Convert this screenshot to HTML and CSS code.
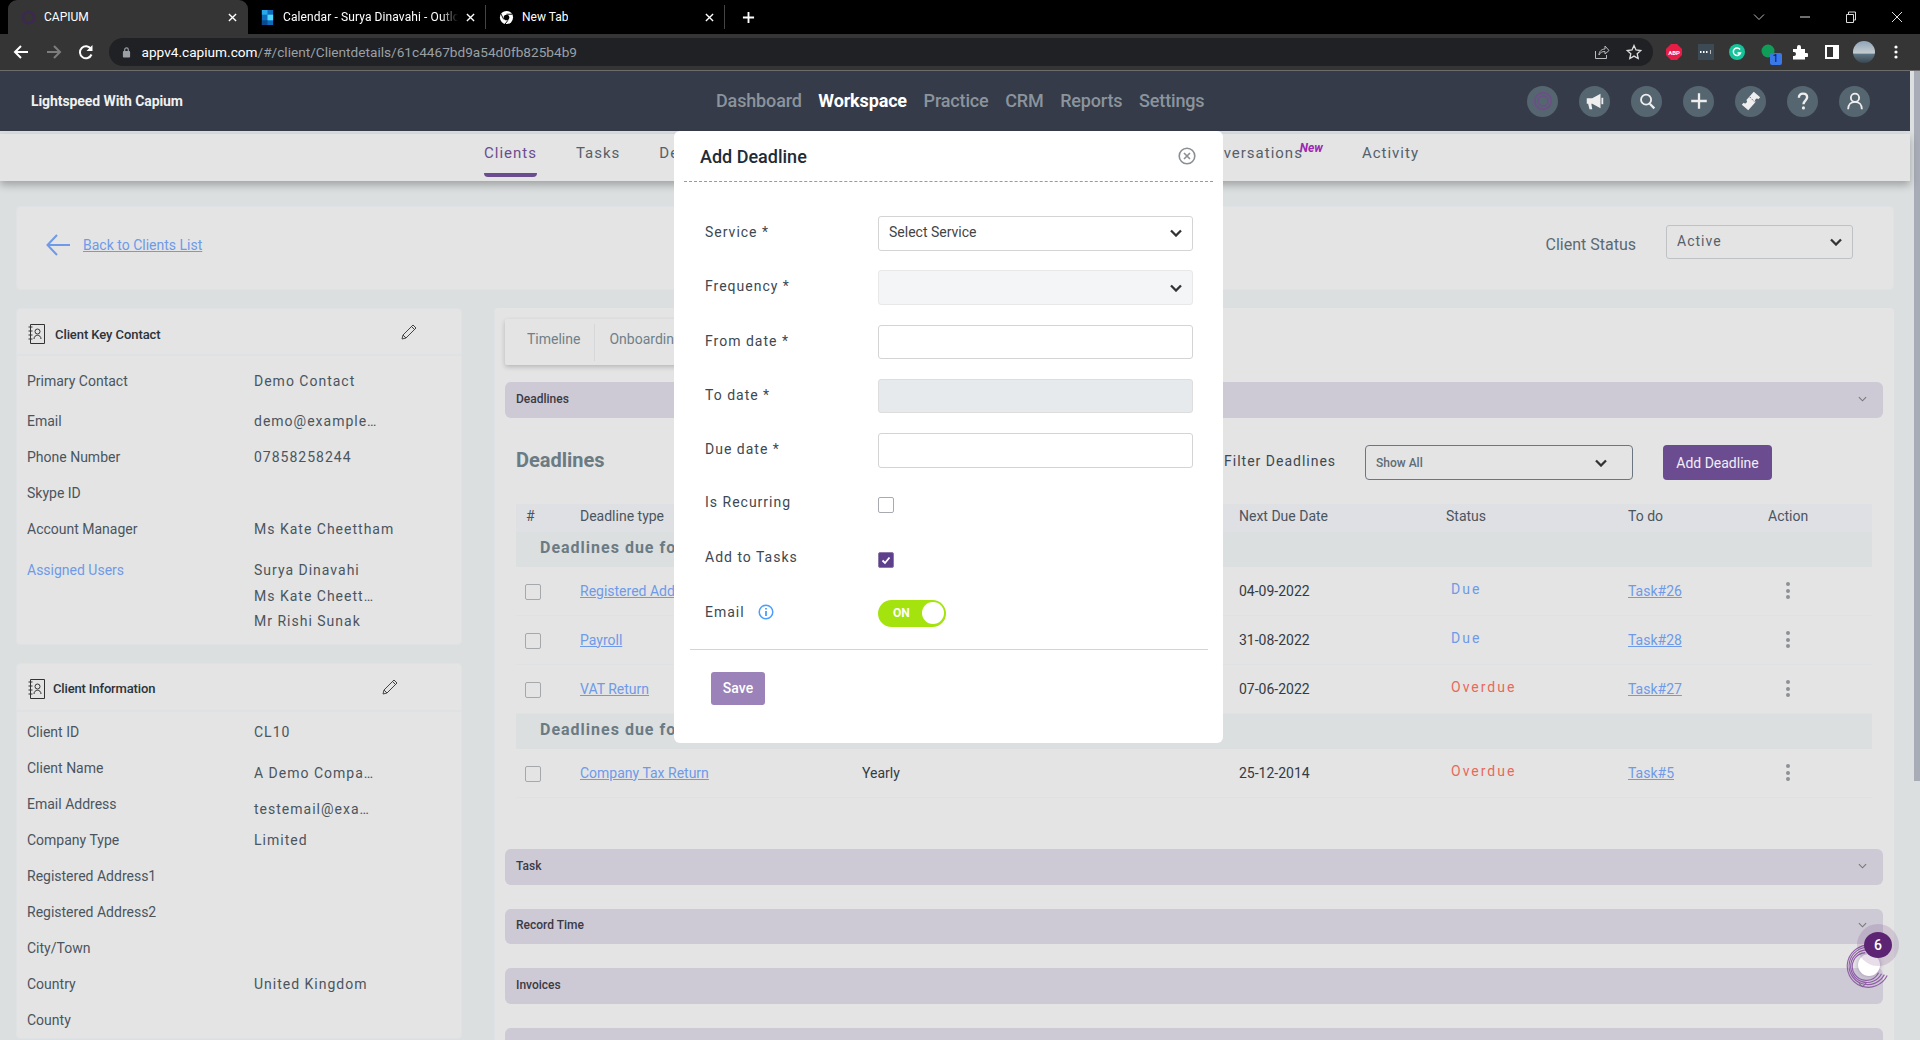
FILE: index.html
```html
<!DOCTYPE html>
<html lang="en">
<head>
<meta charset="utf-8">
<title>CAPIUM</title>
<link rel="stylesheet" href="styles.css">
</head>
<body>
<div class="browser">
  <div class="tabstrip">
    <div class="tab tab-active">
      <svg class="fav" viewBox="0 0 16 16"><circle cx="8" cy="8" r="6" fill="none" stroke="#3b2a4d" stroke-width="3"/></svg>
      <span class="tab-title">CAPIUM</span>
      <svg class="tab-x" viewBox="0 0 10 10"><path d="M1 1l8 8M9 1l-8 8" stroke="#fff" stroke-width="1.5"/></svg>
    </div>
    <div class="tab tab-two">
      <svg class="fav" viewBox="0 0 16 16"><rect x="2" width="12" height="16" fill="#0f6cbd"/><rect x="2" width="6" height="5" fill="#28a8ea"/><rect x="8" y="5" width="6" height="6" fill="#50d9ff"/><rect x="2" y="11" width="6" height="5" fill="#0a4a8a"/></svg>
      <span class="tab-title tab-clip">Calendar - Surya Dinavahi - Outlook</span>
      <svg class="tab-x" viewBox="0 0 10 10"><path d="M1 1l8 8M9 1l-8 8" stroke="#fff" stroke-width="1.5"/></svg>
    </div>
    <div class="tab tab-three">
      <svg class="fav" viewBox="0 0 16 16"><circle cx="8" cy="8" r="7" fill="#fff"/><circle cx="8" cy="8" r="3" fill="#000"/><path d="M8 4.500h6M5 10L2 4M9.500 11L6.500 15" stroke="#000" stroke-width="1"/></svg>
      <span class="tab-title">New Tab</span>
      <svg class="tab-x" viewBox="0 0 10 10"><path d="M1 1l8 8M9 1l-8 8" stroke="#fff" stroke-width="1.5"/></svg>
    </div>
    <svg class="newtab" viewBox="0 0 14 14"><path d="M7 1v12M1 7h12" stroke="#fff" stroke-width="2"/></svg>
    <div class="winctl">
      <svg viewBox="0 0 12 12"><path d="M1 3.500l5 5 5-5" fill="none" stroke="#bbb"/></svg>
      <svg viewBox="0 0 12 12"><path d="M1 6h10" stroke="#ddd"/></svg>
      <svg viewBox="0 0 12 12"><path d="M1.500 3.500h7v8h-7zM3.500 3.500v-2.500h7v8h-2" fill="none" stroke="#ddd"/></svg>
      <svg viewBox="0 0 12 12"><path d="M1 1l10 10M11 1L1 11" stroke="#ddd"/></svg>
    </div>
  </div>
  <div class="toolbar">
    <svg class="nav-ic" viewBox="0 0 16 16"><path d="M15 8H2M8 2L2 8l6 6" fill="none" stroke="#fff" stroke-width="2"/></svg>
    <svg class="nav-ic" viewBox="0 0 16 16"><path d="M1 8h13M8 2l6 6-6 6" fill="none" stroke="#7d7d7d" stroke-width="2"/></svg>
    <svg class="nav-ic" viewBox="0 0 16 16"><path d="M13.500 10.500A6 6 0 1 1 13 5" fill="none" stroke="#fff" stroke-width="2"/><path d="M14.500 1v6h-6z" fill="#fff"/></svg>
    <div class="omnibox">
      <svg class="lock" viewBox="0 0 10 12"><rect x="1" y="5" width="8" height="7" rx="1" fill="#9aa0a6"/><path d="M3 5V3.500a2 2 0 0 1 4 0V5" fill="none" stroke="#9aa0a6" stroke-width="1.300"/></svg>
      <span class="url"><b class="url-host">appv4.capium.com</b>/#/client/Clientdetails/61c4467bd9a54d0fb825b4b9</span>
      <svg class="omni-ic" viewBox="0 0 16 16"><path d="M1.500 7v7.500h11V11" fill="none" stroke="#bbb"/><path d="M5 11c0-4 3-6 6-6V2l4 4.500L11 10V7.500c-3 0-5 1-6 3.500z" fill="none" stroke="#bbb"/></svg>
      <svg class="omni-ic" viewBox="0 0 16 16"><path d="M8 1.500l2 4.500 4.800.500-3.600 3.200 1 4.800L8 12.100 3.800 14.500l1-4.800L1.200 6.500 6 6z" fill="none" stroke="#ddd" stroke-width="1.300"/></svg>
    </div>
    <div class="exts">
      <svg class="ext" viewBox="0 0 16 16"><path d="M5 0h6l5 5v6l-5 5H5l-5-5V5z" fill="#e81d45"/><text x="8" y="10.500" class="ext-abp">ABP</text></svg>
      <svg class="ext" viewBox="0 0 16 16"><rect width="16" height="16" fill="#3c4a56"/><path d="M2 8h1.500M5 8h1.500M8 8h1.500" stroke="#fff" stroke-width="2"/><path d="M12.500 6v4" stroke="#bbb"/></svg>
      <svg class="ext" viewBox="0 0 16 16"><circle cx="8" cy="8" r="8" fill="#15c39a"/><path d="M11 5.500A3.700 3.700 0 1 0 11.500 9H8.500" fill="none" stroke="#fff" stroke-width="1.500"/></svg>
      <span class="ext-badge-wrap"><svg class="ext" viewBox="0 0 16 16"><circle cx="7" cy="7" r="6.500" fill="#0f9d58"/></svg><span class="ext-badge">1</span></span>
      <svg class="ext" viewBox="0 0 16 16"><path d="M1 5h4V3a2 2 0 0 1 4 0v2h4v4h1.500a2 2 0 0 1 0 4H13v2.500H1V12h1a2 2 0 0 0 0-4H1z" fill="#fff"/></svg>
      <svg class="ext" viewBox="0 0 16 16"><rect x="1" y="1" width="14" height="14" fill="#fff"/><rect x="3" y="3" width="6" height="10" fill="#333"/></svg>
      <svg class="avatar" viewBox="0 0 22 22"><defs><linearGradient id="av" x1="0" y1="0" x2="0" y2="1"><stop offset="0" stop-color="#8fa5b8"/><stop offset=".55" stop-color="#c5ccd0"/><stop offset=".6" stop-color="#5d7482"/><stop offset="1" stop-color="#3a4750"/></linearGradient></defs><circle cx="11" cy="11" r="11" fill="url(#av)"/></svg>
      <svg class="ext ext-dots" viewBox="0 0 16 16"><circle cx="8" cy="3" r="1.600" fill="#fff"/><circle cx="8" cy="8" r="1.600" fill="#fff"/><circle cx="8" cy="13" r="1.600" fill="#fff"/></svg>
    </div>
  </div>
</div>

<div class="app">
  <div class="content">
    <header class="topbar">
      <div class="brand">Lightspeed With Capium</div>
      <nav class="mainnav">
        <a>Dashboard</a><a class="on">Workspace</a><a>Practice</a><a>CRM</a><a>Reports</a><a>Settings</a>
      </nav>
      <div class="hicons">
        <span class="hicon"><svg viewBox="0 0 24 24"><circle cx="12" cy="12" r="9" fill="none" stroke="#6b4f86" stroke-width="2"/><circle cx="12" cy="12" r="5.500" fill="none" stroke="#6b4f86" stroke-width="1.500"/></svg></span>
        <span class="hicon"><svg viewBox="0 0 24 24"><path d="M3 9h6l9-5v16l-9-5H8l1 6H6l-1.500-6H3z" fill="#eee"/><path d="M20 8.500v7" stroke="#eee" stroke-width="2"/></svg></span>
        <span class="hicon"><svg viewBox="0 0 24 24"><circle cx="11" cy="10.500" r="5.500" fill="none" stroke="#eee" stroke-width="2"/><path d="M15 15l5 5" stroke="#eee" stroke-width="2.500"/></svg></span>
        <span class="hicon"><svg viewBox="0 0 24 24"><path d="M12 3.500v17M3.500 12h17" stroke="#eee" stroke-width="2.500"/></svg></span>
        <span class="hicon"><svg viewBox="0 0 24 24"><path d="M15 2l7 6-2 2a2 2 0 0 0-3 3l-8 9-7-6 2-2a2 2 0 0 0 3-3z" fill="#eee"/><path d="M10.500 7.500l6 6" stroke="#566670" stroke-dasharray="2 1.500"/></svg></span>
        <span class="hicon"><svg viewBox="0 0 24 24"><path d="M7.500 8.500C7.500 5.500 9.500 4 12 4s4.500 1.500 4.500 4c0 3.500-4 3.500-4 7.500" fill="none" stroke="#eee" stroke-width="2.600"/><circle cx="12.500" cy="19.500" r="1.700" fill="#eee"/></svg></span>
        <span class="hicon"><svg viewBox="0 0 24 24"><circle cx="12" cy="8.500" r="4.500" fill="none" stroke="#eee" stroke-width="2"/><path d="M4.500 21c0-5 3-8 7.500-8s7.500 3 7.500 8" fill="none" stroke="#eee" stroke-width="2"/></svg></span>
      </div>
    </header>
    <div class="subwrap">
      <nav class="subnav">
        <div class="subgroup">
          <a class="subtab subtab-on">Clients</a><a class="subtab">Tasks</a><a class="subtab">Deadlines</a>
        </div>
        <div class="subgroup">
          <a class="subtab subtab-new">Conversations<em class="newtag">New</em></a><a class="subtab">Activity</a>
        </div>
      </nav>
    </div>

    <main class="main">
      <section class="backcard">
        <svg class="backarrow" viewBox="0 0 24 22"><path d="M24 11H2M11 1L1.500 11 11 21" fill="none" stroke="#6e9ae8" stroke-width="2"/></svg>
        <a class="backlink">Back to Clients List</a>
        <span class="status-label">Client Status</span>
        <div class="status-select"><span>Active</span><svg class="chev" viewBox="0 0 12 8"><path d="M1 1.500l5 5 5-5" fill="none" stroke="#333" stroke-width="2.300"/></svg></div>
      </section>

      <div class="columns">
        <aside class="leftcol">
          <section class="card card-key">
            <div class="cardhead">
              <svg class="bookic" viewBox="0 0 17 20"><path d="M2.500 .500h14v19h-14z" fill="none" stroke="#333"/><path d="M.5 3h4M.5 7h4M.5 11h4M.5 15h4" stroke="#333"/><circle cx="9.500" cy="7.500" r="2.500" fill="none" stroke="#333"/><path d="M6 15c0-5 7-5 7 0" fill="none" stroke="#333"/></svg>
              <h3 class="cardtitle">Client Key Contact</h3>
              <svg class="pencil" viewBox="0 0 16 16"><path d="M1 15l1-4L12 1l3 3L5 14zM2 11l3 3M10.500 2.500l3 3" fill="none" stroke="#444"/></svg>
            </div>
            <div class="kv kv-key">
              <div class="kvrow kvrow-first"><span class="k">Primary Contact</span><span class="v">Demo Contact</span></div>
              <div class="kvrow"><span class="k">Email</span><span class="v">demo@example…</span></div>
              <div class="kvrow"><span class="k">Phone Number</span><span class="v">07858258244</span></div>
              <div class="kvrow"><span class="k">Skype ID</span><span class="v"></span></div>
              <div class="kvrow"><span class="k">Account Manager</span><span class="v">Ms Kate Cheettham</span></div>
              <div class="kvrow kvrow-users"><span class="k k-link">Assigned Users</span>
                <div class="vlist"><span class="v">Surya Dinavahi</span><span class="v">Ms Kate Cheett…</span><span class="v">Mr Rishi Sunak</span></div>
              </div>
            </div>
          </section>
          <section class="card card-info">
            <div class="cardhead cardhead-info">
              <svg class="bookic" viewBox="0 0 17 20"><path d="M2.500 .500h14v19h-14z" fill="none" stroke="#333"/><path d="M.5 3h4M.5 7h4M.5 11h4M.5 15h4" stroke="#333"/><circle cx="9.500" cy="7.500" r="2.500" fill="none" stroke="#333"/><path d="M6 15c0-5 7-5 7 0" fill="none" stroke="#333"/></svg>
              <h3 class="cardtitle">Client Information</h3>
              <svg class="pencil" viewBox="0 0 16 16"><path d="M1 15l1-4L12 1l3 3L5 14zM2 11l3 3M10.500 2.500l3 3" fill="none" stroke="#444"/></svg>
            </div>
            <div class="kv kv-info">
              <div class="kvrow"><span class="k">Client ID</span><span class="v">CL10</span></div>
              <div class="kvrow"><span class="k">Client Name</span><span class="v v-low">A Demo Compa…</span></div>
              <div class="kvrow"><span class="k">Email Address</span><span class="v v-low">testemail@exa…</span></div>
              <div class="kvrow"><span class="k">Company Type</span><span class="v">Limited</span></div>
              <div class="kvrow"><span class="k">Registered Address1</span><span class="v"></span></div>
              <div class="kvrow"><span class="k">Registered Address2</span><span class="v"></span></div>
              <div class="kvrow"><span class="k">City/Town</span><span class="v"></span></div>
              <div class="kvrow"><span class="k">Country</span><span class="v">United Kingdom</span></div>
              <div class="kvrow"><span class="k">County</span><span class="v"></span></div>
            </div>
          </section>
        </aside>

        <section class="rightcol">
          <div class="pilltabs"><a class="pilltab">Timeline</a><a class="pilltab">Onboarding</a></div>
          <div class="acc"><span>Deadlines</span><svg class="acc-chev" viewBox="0 0 10 6"><path d="M1 1l4 4 4-4" fill="none" stroke="#777" stroke-width="1.200"/></svg></div>

          <div class="deadlines">
            <div class="dl-top">
              <h2 class="dl-title">Deadlines</h2>
              <div class="dl-filter">
                <span class="filter-label">Filter Deadlines</span>
                <div class="filter-select"><span>Show All</span><svg class="chev" viewBox="0 0 12 8"><path d="M1 1.500l5 5 5-5" fill="none" stroke="#333" stroke-width="2.300"/></svg></div>
                <button class="btn-add">Add Deadline</button>
              </div>
            </div>
            <div class="tbl">
              <div class="trow thead"><span class="hash">#</span><span>Deadline type</span><span></span><span>Next Due Date</span><span>Status</span><span>To do</span><span>Action</span></div>
              <div class="tgroup tgroup-first">Deadlines due for 2022</div>
              <div class="trow tbody"><span class="hash"><i class="cb"></i></span><a class="lnk">Registered Address</a><span></span><span>04-09-2022</span><span class="st st-due">Due</span><a class="lnk">Task#26</a><span class="act"><i></i><i></i><i></i></span></div>
              <div class="trow tbody"><span class="hash"><i class="cb"></i></span><a class="lnk">Payroll</a><span></span><span>31-08-2022</span><span class="st st-due">Due</span><a class="lnk">Task#28</a><span class="act"><i></i><i></i><i></i></span></div>
              <div class="trow tbody"><span class="hash"><i class="cb"></i></span><a class="lnk">VAT Return</a><span></span><span>07-06-2022</span><span class="st st-over">Overdue</span><a class="lnk">Task#27</a><span class="act"><i></i><i></i><i></i></span></div>
              <div class="tgroup">Deadlines due for 2014</div>
              <div class="trow tbody"><span class="hash"><i class="cb"></i></span><a class="lnk">Company Tax Return</a><span>Yearly</span><span>25-12-2014</span><span class="st st-over">Overdue</span><a class="lnk">Task#5</a><span class="act"><i></i><i></i><i></i></span></div>
            </div>
          </div>

          <div class="acc acc-task"><span>Task</span><svg class="acc-chev" viewBox="0 0 10 6"><path d="M1 1l4 4 4-4" fill="none" stroke="#777" stroke-width="1.200"/></svg></div>
          <div class="acc acc-time"><span>Record Time</span><svg class="acc-chev" viewBox="0 0 10 6"><path d="M1 1l4 4 4-4" fill="none" stroke="#777" stroke-width="1.200"/></svg></div>
          <div class="acc acc-next"><span>Invoices</span><svg class="acc-chev" viewBox="0 0 10 6"><path d="M1 1l4 4 4-4" fill="none" stroke="#777" stroke-width="1.200"/></svg></div>
          <div class="acc acc-next"></div>
        </section>
      </div>
    </main>
  </div>
  <div class="scrolltrack"><div class="scrollthumb"></div></div>

  <div class="modal">
    <div class="modal-head">
      <h2 class="modal-title">Add Deadline</h2>
      <svg class="modal-x" viewBox="0 0 18 18"><circle cx="9" cy="9" r="7.800" fill="none" stroke="#8a8f94" stroke-width="1.600"/><path d="M6 6l6 6M12 6l-6 6" stroke="#8a8f94" stroke-width="1.600"/></svg>
    </div>
    <div class="mform">
      <label class="mlabel">Service *</label>
      <div class="minput"><span class="minput-text">Select Service</span><svg class="chev" viewBox="0 0 12 8"><path d="M1 1.500l5 5 5-5" fill="none" stroke="#333" stroke-width="2.300"/></svg></div>
      <label class="mlabel">Frequency *</label>
      <div class="minput minput-soft"><svg class="chev" viewBox="0 0 12 8"><path d="M1 1.500l5 5 5-5" fill="none" stroke="#333" stroke-width="2.300"/></svg></div>
      <label class="mlabel">From date *</label>
      <div class="minput"></div>
      <label class="mlabel">To date *</label>
      <div class="minput minput-off"></div>
      <label class="mlabel">Due date *</label>
      <div class="minput"></div>
      <label class="mlabel mlabel-top">Is Recurring</label>
      <div class="mcheckcell"><i class="mcb"></i></div>
      <label class="mlabel mlabel-top">Add to Tasks</label>
      <div class="mcheckcell"><i class="mcb mcb-on"><svg viewBox="0 0 12 12"><path d="M2.500 6.500l2.500 2.500 4.500-5.500" fill="none" stroke="#fff" stroke-width="1.800"/></svg></i></div>
      <label class="mlabel mlabel-email">Email <svg class="infoic" viewBox="0 0 16 16"><circle cx="8" cy="8" r="6.800" fill="none" stroke="#4a9eff" stroke-width="1.500"/><path d="M8 7v5M8 4v1.600" stroke="#4a9eff" stroke-width="1.800"/></svg></label>
      <div class="toggle"><span>ON</span><i></i></div>
    </div>
    <hr class="mrule">
    <button class="btn-save">Save</button>
  </div>

  <div class="chatw">
    <svg class="spiral" viewBox="0 0 48 48"><g fill="none" stroke="#8f5ea6"><path d="M43 34A22 22 0 1 1 27 2.500" stroke-width="1.200"/><path d="M40 33A19.500 19.500 0 1 1 24 4.500" stroke-width="1.200"/><path d="M37 32A17 17 0 1 1 22 7.200" stroke-width="1.200"/><path d="M34 31A14.500 14.500 0 1 1 20 10" stroke-width="1.200"/></g></svg>
    <i class="chat-core"></i>
    <span class="chat-halo"><span class="chat-badge">6</span></span>
  </div>
</div>
</body>
</html>
```
FILE: styles.css
```css
* { box-sizing: border-box; }
html, body { margin: 0; height: 1040px; overflow: hidden; }
body { font-family: Roboto, "Liberation Sans", sans-serif; font-size: 14px; background: #dcdfe0; color: #3d4852; }
h2, h3 { margin: 0; }
a { cursor: pointer; }
i, em { display: block; }

.browser { height: 71px; background: #353535; }
.tabstrip { height: 34px; background: #000; display: flex; align-items: stretch; position: relative; padding-left: 8px; }
.tab { display: flex; align-items: center; font-size: 12px; color: #fff; height: 34px; position: relative; }
.tab-active { width: 240px; background: #353535; border-radius: 9px 9px 0 0; padding-left: 13px; }
.tab-two { width: 238px; padding-left: 12px; border-right: 1px solid #444; height: 24px; margin-top: 5px; }
.tab-three { width: 239px; padding-left: 13px; border-right: 1px solid #444; height: 24px; margin-top: 5px; }
.fav { width: 15px; height: 15px; flex: none; }
.tab-title { margin-left: 8px; white-space: nowrap; overflow: hidden; }
.tab-clip { width: 175px; letter-spacing: .1px; -webkit-mask-image: linear-gradient(90deg, #000 90%, transparent); mask-image: linear-gradient(90deg, #000 90%, transparent); }
.tab-x { width: 9px; height: 9px; position: absolute; right: 10px; top: 50%; margin-top: -4px; }
.tab-active .tab-x { right: 11px; }
.newtab { width: 13px; height: 13px; align-self: center; margin-left: 17px; }
.winctl { margin-left: auto; display: flex; align-items: center; gap: 34px; padding-right: 17px; }
.winctl svg { width: 12px; height: 12px; }
.toolbar { height: 37px; padding-top: 4px; display: flex; align-items: flex-start; padding-left: 13px; border-bottom: 1px solid #6c6c6c; }
.nav-ic { width: 16px; height: 16px; margin: 6px 17px 0 0; flex: none; }
.nav-ic:nth-child(2) { margin-right: 16px; }
.nav-ic:nth-child(3) { margin-right: 15px; }
.omnibox { width: 1544px; height: 28px; background: #202124; border-radius: 14px; display: flex; align-items: center; padding: 0 11px 0 13px; }
.lock { width: 9px; height: 12px; flex: none; }
.url { margin-left: 10.500px; font-size: 13.650px; color: #9aa0a6; white-space: nowrap; }
.url-host { color: #fff; font-weight: 400; }
.omni-ic { width: 16px; height: 16px; flex: none; }
.omni-ic:nth-of-type(2) { margin-left: auto; margin-right: 16px; }
.exts { display: flex; align-items: center; height: 28px; margin-left: 13px; gap: 15.500px; }
.ext { width: 16px; height: 16px; flex: none; }
.ext-abp { font: 700 6px Roboto, sans-serif; fill: #fff; text-anchor: middle; }
.ext-badge-wrap { position: relative; display: block; width: 16px; height: 16px; }
.ext-badge { position: absolute; left: 9px; top: 9px; width: 12px; height: 12px; background: #3b78e7; border-radius: 2px; font-size: 10px; line-height: 12px; text-align: center; color: #111; }
.avatar { width: 22px; height: 22px; flex: none; margin: 0 -3px 0 -2px; }

.app { display: flex; position: relative; height: 969px; overflow: hidden; }
.content { flex: none; width: 1910px; }
.scrolltrack { flex: 1; display: flex; justify-content: flex-end; background: #dcdfe0; }
.scrollthumb { width: 6px; height: 710px; background: #a8acb6; }

.topbar { height: 60px; background: #353b48; display: flex; align-items: center; padding-left: 31px; position: relative; }
.brand { width: 685px; color: #f0f0f0; font-size: 14px; font-weight: 700; letter-spacing: -.08px; }
.mainnav { display: flex; gap: 16.600px; padding-bottom: 2px; font-size: 18px; font-weight: 500; letter-spacing: -.15px; color: #8b949d; }
.mainnav .on { color: #fff; font-weight: 700; }
.hicons { margin-left: auto; display: flex; gap: 21px; padding-right: 40px; }
.hicon { width: 31px; height: 31px; border-radius: 50%; background: #566670; display: flex; align-items: center; justify-content: center; }
.hicon svg { width: 22px; height: 22px; }

.subwrap { padding-top: 3px; }
.subnav { height: 47px; background: #e4e4e4; display: flex; justify-content: space-between; padding: 0 491px 0 484px; box-shadow: 0 4px 8px rgba(0,0,0,.28); position: relative; }
.subgroup { display: flex; gap: 39px; }
.subtab { height: 43px; padding-top: 10px; font-size: 15px; letter-spacing: 1px; color: #55606b; position: relative; white-space: nowrap; }
.subtab-on { color: #6b4c91; border-bottom: 4px solid #6b4c91; border-radius: 0 0 4px 4px; }
.subtab-new { margin-right: 20px; }
.newtag { position: absolute; right: -20px; top: 7px; font-size: 12px; font-weight: 700; letter-spacing: 0; color: #9c27b0; }

.main { padding: 25px 16px 0; }
.backcard { height: 84px; background: #e4e4e4; border: 1px solid #dfe2e4; border-radius: 4px; display: flex; align-items: center; padding: 0 40px 6px 29px; }
.backarrow { width: 24px; height: 22px; flex: none; }
.backlink { margin-left: 13px; color: #6e9ae8; text-decoration: underline; font-size: 14px; }
.status-label { margin-left: auto; font-size: 16px; color: #5a6a74; margin-top: -2px; }
.status-select { width: 187px; height: 34px; margin: -6px 0 0 30px; border: 1px solid #bfc2c4; border-radius: 3px; display: flex; align-items: center; justify-content: space-between; padding: 0 10px; letter-spacing: 1px; color: #55606b; }
.status-select span { margin-top: -2px; }
.chev { width: 12px; height: 8px; flex: none; }

.columns { display: flex; gap: 32px; margin-top: 18px; align-items: flex-start; }
.leftcol { width: 446px; flex: none; display: flex; flex-direction: column; gap: 18px; }
.card { background: #e4e4e4; border: 1px solid #dfe2e4; border-radius: 4px; }
.card-key { height: 337px; }
.cardhead { height: 47px; display: flex; align-items: center; padding: 5px 44px 0 11px; border-bottom: 2px solid #dfe2e4; }
.cardhead-info { height: 48px; padding-right: 63px; padding-top: 3px; }
.bookic { width: 17px; height: 20px; flex: none; }
.cardtitle { margin-left: 10px; font-size: 13px; font-weight: 500; letter-spacing: -.08px; color: #2b333b; }
.cardhead-info .cardtitle { margin-left: 8px; letter-spacing: -.15px; }
.pencil { width: 16px; height: 16px; margin-left: auto; margin-top: -4px; flex: none; }
.kv { padding: 0 10px; }
.kv-key { padding-top: 7px; }
.kv-info { padding-top: 2px; }
.kvrow { display: grid; grid-template-columns: 227px 1fr; height: 36px; line-height: 36px; align-items: start; }
.kvrow-first { height: 40px; }
.kvrow-users { height: auto; padding-top: 5px; }
.k { color: #4a5560; white-space: nowrap; }
.k-link { color: #6e9ae8; }
.v { letter-spacing: 1px; color: #4a5560; white-space: nowrap; }
.v-low { margin-top: 5px; }
.vlist { display: flex; flex-direction: column; padding-top: 6px; }
.vlist .v { line-height: 25.500px; }

.rightcol { flex: 1; height: 900px; background: #e4e4e4; border-left: 1px solid #dfe2e4; border-radius: 4px; padding: 11px 11px 0 10px; }
.pilltabs { width: 500px; height: 46px; display: flex; align-items: flex-start; padding-top: 5px; box-shadow: 0 2px 5px rgba(0,0,0,.2); border-radius: 2px; }
.pilltab { height: 37px; line-height: 31px; padding: 0 14px 0 22px; color: #6f8088; border-right: 1px solid #d5d7d9; }
.pilltab + .pilltab { padding-left: 14px; border-right: 0; }
.acc { height: 36px; margin-top: 17px; background: #cdc9d5; border-radius: 6px; display: flex; align-items: center; justify-content: space-between; padding: 0 16px 2px 11px; font-size: 12px; font-weight: 500; color: #3a3a44; }
.acc-chev { width: 9px; height: 6px; }
.acc-task { margin-top: 51px; }
.acc-time { height: 35px; margin-top: 24px; }
.acc-next { margin-top: 24px; }

.deadlines { padding: 27px 11px 0; }
.dl-top { display: flex; justify-content: space-between; align-items: flex-start; height: 35px; }
.dl-title { font-size: 20px; font-weight: 700; line-height: 30px; color: #6b7b84; }
.dl-filter { display: flex; align-items: center; height: 35px; gap: 30px; padding-right: 100px; }
.filter-label { letter-spacing: 1px; color: #3d4852; width: 111px; white-space: nowrap; margin-top: -3px; }
.filter-select { width: 268px; height: 35px; border: 1px solid #6c7680; border-radius: 4px; display: flex; align-items: center; justify-content: space-between; padding: 0 25px 0 10px; font-size: 12px; font-weight: 500; color: #5f6c75; }
.btn-add { width: 109px; height: 35px; border: 0; border-radius: 4px; background: #6b4c91; color: #f2eef7; font: 400 14px Roboto, sans-serif; padding: 0; }

.tbl { margin-top: 24px; }
.trow { display: grid; grid-template-columns: 64px 282px 377px 207px 182px 140px 1fr; align-items: center; }
.thead { height: 28px; background: #dfe0e4; color: #4a5560; padding-bottom: 4px; }
.tbody { height: 49px; border-bottom: 1px solid #dfe1e3; color: #333b44; }
.hash { padding-left: 10px; }
.tgroup { height: 35px; background: #dcdfe0; padding: 0 0 0 24px; font-size: 16px; font-weight: 700; letter-spacing: 1px; line-height: 32px; color: #6b7b84; }
.tgroup-first { height: 34.500px; }
.cb { width: 16px; height: 16px; border: 1px solid #a6a9ac; border-radius: 2px; margin: 3px 0 0 -1px; }
.lnk { color: #6e9ae8; text-decoration: underline; justify-self: start; white-space: nowrap; }
.st { padding-left: 5px; letter-spacing: 2px; margin-top: -4px; }
.st-due { color: #6e9ae8; }
.st-over { color: #e8695a; }
.act { display: flex; flex-direction: column; gap: 2.500px; padding-left: 18px; }
.act i { width: 4px; height: 4px; border-radius: 50%; background: #8d9195; }

.modal { position: absolute; left: 674px; top: 60px; width: 549px; height: 612px; background: #fff; border-radius: 6px; }
.modal-head { height: 51px; margin: 0 10px; padding: 0 17px 0 16px; display: flex; align-items: center; justify-content: space-between; border-bottom: 1px dashed #9a9a9a; }
.modal-title { font-size: 18px; font-weight: 500; color: #212b36; }
.modal-x { width: 18px; height: 18px; }
.mform { display: grid; grid-template-columns: 173px 315px; row-gap: 19.750px; padding: 34px 0 0 31px; }
.mlabel { letter-spacing: 1px; color: #3d4852; line-height: 32px; white-space: nowrap; }
.mlabel-top { line-height: 30px; }
.mlabel-email { display: flex; align-items: center; gap: 13px; height: 33px; padding-bottom: 1px; }
.minput { height: 34.500px; border: 1px solid #d4d4d4; border-radius: 3px; display: flex; align-items: center; justify-content: space-between; padding: 0 10px; color: #444; background: #fff; }
.minput-text { margin-top: -3px; }
.minput-soft { background: #f4f5f6; justify-content: flex-end; border-color: #e8e8e8; }
.minput-off { background: #e7eaec; border-color: #ddd; }
.mcheckcell { height: 34.500px; padding-top: 10px; }
.mcb { width: 16px; height: 16px; border: 1px solid #a9a9b2; border-radius: 2px; }
.mcb-on { background: #5d3f8c; display: flex; align-items: center; justify-content: center; border-color: #8d7aa8; }
.mcb-on svg { width: 12px; height: 12px; }
.infoic { width: 16px; height: 16px; }
.toggle { width: 68px; height: 27px; margin-top: 4px; border-radius: 14px; background: #a5e30e; display: flex; align-items: center; justify-content: space-between; padding: 0 2px 0 15px; color: #fff; font-size: 12px; font-weight: 700; }
.toggle i { width: 22px; height: 22px; border-radius: 50%; background: #fff; }
.mrule { margin: 20px 0 0 16px; width: 518px; height: 1px; background: #d4d4d4; border: 0; }
.btn-save { display: block; margin: 22px 0 0 37px; width: 54px; height: 33px; border: 0; border-radius: 3px; background: #9b82b8; color: #fff; font: 500 14px Roboto, sans-serif; padding: 0; }

.chatw { position: absolute; left: 1846px; top: 852px; width: 64px; height: 64px; }
.spiral { position: absolute; left: 0; top: 20px; width: 46px; height: 46px; }
.chat-core { position: absolute; left: 12px; top: 31px; width: 22px; height: 22px; border-radius: 50%; background: #fff; box-shadow: 0 0 4px rgba(120,80,150,.5); }
.chat-halo { position: absolute; left: 11px; top: 1px; width: 42px; height: 42px; border-radius: 50%; background: rgba(93,36,114,.15); display: flex; align-items: center; justify-content: center; }
.chat-badge { width: 28px; height: 26px; border-radius: 50%; background: #5c2472; color: #fff; font-weight: 500; font-size: 14px; display: flex; align-items: center; justify-content: center; }
```
